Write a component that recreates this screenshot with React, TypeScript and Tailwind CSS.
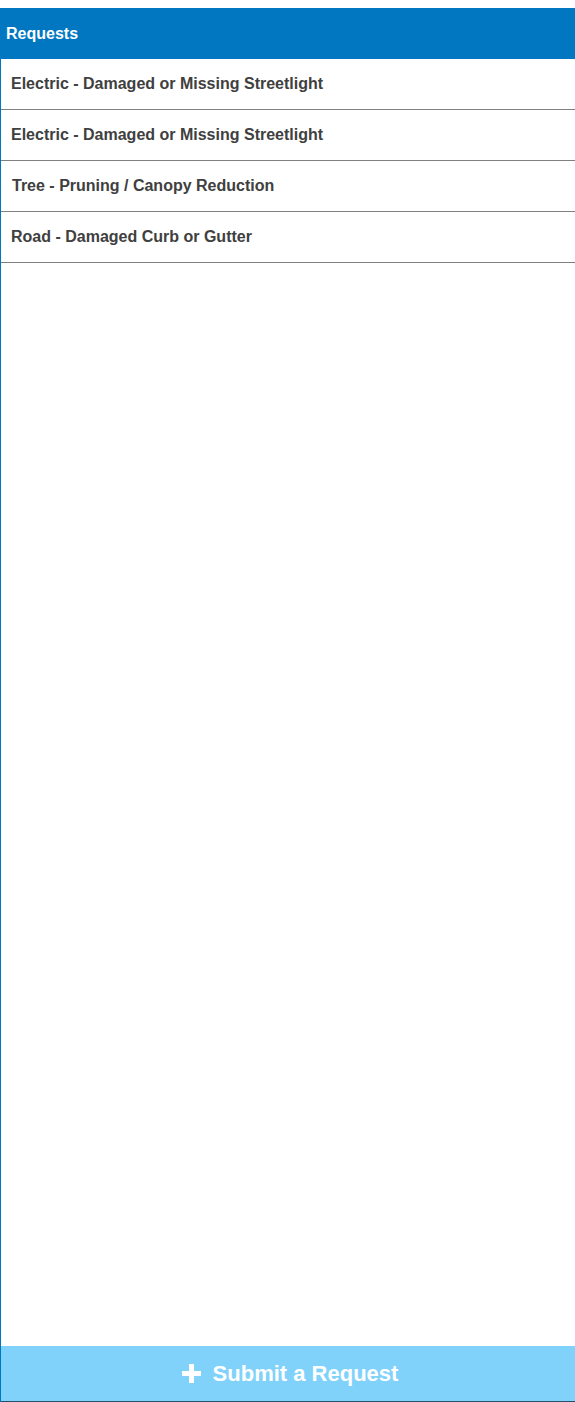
const requests = [
  { title: 'Electric - Damaged or Missing Streetlight', pad: 'pl-[10px]' },
  { title: 'Electric - Damaged or Missing Streetlight', pad: 'pl-[10px]' },
  { title: 'Tree - Pruning / Canopy Reduction', pad: 'pl-[11px]' },
  { title: 'Road - Damaged Curb or Gutter', pad: 'pl-[10px]' },
];

function PlusIcon() {
  return (
    <svg width="19" height="19" viewBox="0 0 19 19" className="mr-[12px]">
      <rect x="7" y="0" width="5" height="19" fill="#ffffff" />
      <rect x="0" y="7" width="19" height="5" fill="#ffffff" />
    </svg>
  );
}

export default function App() {
  return (
    <div className="w-[575px] h-[1402px] bg-white pt-2 font-['Liberation_Sans',Arial,sans-serif]">
      <div className="h-[1394px] flex flex-col border-l border-[#0077c0]">
        <div className="h-[51px] bg-[#0077c0] -ml-px flex items-center pl-[6px] text-white font-bold text-[16px]">
          Requests
        </div>
        <ul className="flex-1">
          {requests.map((r, i) => (
            <li
              key={i}
              className={`h-[51px] border-b border-[#808080] flex items-center ${r.pad} text-[16px] font-bold text-[#404040]`}
            >
              {r.title}
            </li>
          ))}
        </ul>
        <button className="h-[56px] bg-[#80d2fb] border-b border-[#24506e] flex items-center justify-center pl-[4px] text-white font-bold text-[22px]">
          <PlusIcon />
          Submit a Request
        </button>
      </div>
    </div>
  );
}
